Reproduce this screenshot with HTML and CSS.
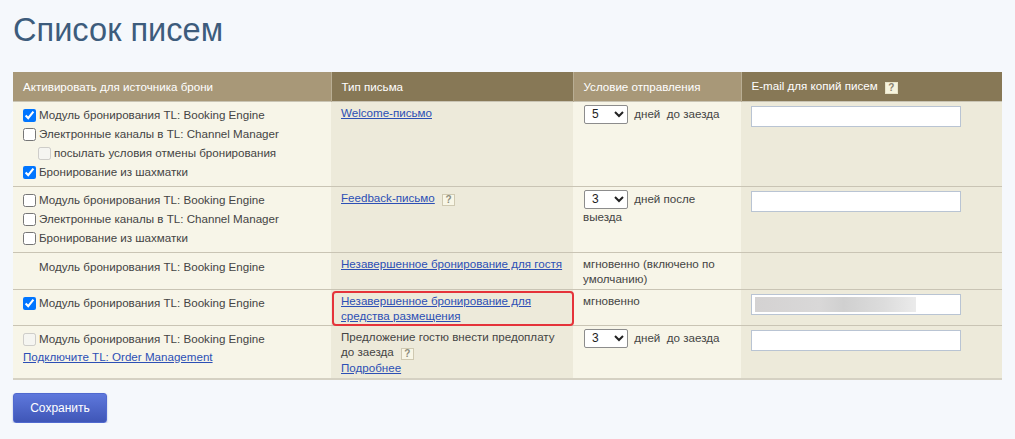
FILE: index.html
```html
<!DOCTYPE html>
<html lang="ru">
<head>
<meta charset="utf-8">
<title>Список писем</title>
<link rel="stylesheet" href="styles.css">
</head>
<body>
<div class="page">
  <h1 class="title">Список писем</h1>
  <table class="letters">
    <colgroup>
      <col class="c1"><col class="c2"><col class="c3"><col class="c4">
    </colgroup>
    <thead>
      <tr>
        <th class="h-light">Активировать для источника брони</th>
        <th class="h-dark">Тип письма</th>
        <th class="h-light">Условие отправления</th>
        <th class="h-dark">E-mail для копий писем <span class="help help-head">?</span></th>
      </tr>
    </thead>
    <tbody>
      <tr class="r1">
        <td class="light">
          <label class="opt"><input type="checkbox" checked> Модуль бронирования TL: Booking Engine</label>
          <label class="opt"><input type="checkbox"> Электронные каналы в TL: Channel Manager</label>
          <label class="opt sub"><input type="checkbox" disabled> посылать условия отмены бронирования</label>
          <label class="opt"><input type="checkbox" checked> Бронирование из шахматки</label>
        </td>
        <td class="dark type"><a href="#" class="link">Welcome-письмо</a></td>
        <td class="light cond">
          <select class="days"><option>5</option></select> дней&nbsp; до заезда
        </td>
        <td class="dark"><div class="email"></div></td>
      </tr>
      <tr class="r2">
        <td class="light">
          <label class="opt"><input type="checkbox"> Модуль бронирования TL: Booking Engine</label>
          <label class="opt"><input type="checkbox"> Электронные каналы в TL: Channel Manager</label>
          <label class="opt"><input type="checkbox"> Бронирование из шахматки</label>
        </td>
        <td class="dark type"><a href="#" class="link">Feedback-письмо</a> <span class="help">?</span></td>
        <td class="light cond">
          <select class="days"><option>3</option></select> дней после выезда
        </td>
        <td class="dark"><div class="email"></div></td>
      </tr>
      <tr class="r3">
        <td class="light"><div class="plain">Модуль бронирования TL: Booking Engine</div></td>
        <td class="dark type"><a href="#" class="link">Незавершенное бронирование для гостя</a></td>
        <td class="light text">мгновенно (включено по умолчанию)</td>
        <td class="dark"></td>
      </tr>
      <tr class="r4">
        <td class="light">
          <label class="opt"><input type="checkbox" checked> Модуль бронирования TL: Booking Engine</label>
        </td>
        <td class="dark type marked"><a href="#" class="link">Незавершенное бронирование для средства размещения</a></td>
        <td class="light text">мгновенно</td>
        <td class="dark"><div class="email"><span class="blurred"></span></div></td>
      </tr>
      <tr class="r5">
        <td class="light">
          <label class="opt"><input type="checkbox" disabled> Модуль бронирования TL: Booking Engine</label>
          <a href="#" class="link connect">Подключите TL: Order Management</a>
        </td>
        <td class="dark type text">Предложение гостю внести предоплату до заезда <span class="help">?</span><br><a href="#" class="link">Подробнее</a></td>
        <td class="light cond">
          <select class="days"><option>3</option></select> дней&nbsp; до заезда
        </td>
        <td class="dark"><div class="email"></div></td>
      </tr>
    </tbody>
  </table>
  <button class="save" type="button">Сохранить</button>
</div>
</body>
</html>
```
FILE: styles.css
```css
html, body {
  margin: 0;
  padding: 0;
  background: #f5f8fc;
}
body {
  font-family: "Liberation Sans", Arial, sans-serif;
  font-size: 11.6px;
  color: #444;
}
.page {
  padding: 9px 13px 0 13px;
}
.title {
  margin: 0 0 22px 0;
  font-size: 32.6px;
  font-weight: normal;
  line-height: 41px;
  color: #3d5c7c;
}
.letters {
  width: 989px;
  table-layout: fixed;
  border-collapse: collapse;
  border-bottom: 2px solid #d5d1c3;
}
.c1 { width: 318px; }
.c2 { width: 242px; }
.c3 { width: 168px; }
.c4 { width: 261px; }

.letters th {
  height: 29px;
  padding: 0 10px;
  text-align: left;
  font-weight: normal;
  color: #fff;
  vertical-align: middle;
  box-sizing: border-box;
}
.h-light { background: #a89878; }
.h-dark { background: #877856; }
.letters th + th { border-left: 1px solid #b9ae94; }

.letters td {
  vertical-align: top;
  padding: 4px 10px 0 10px;
  line-height: 15.5px;
  border-top: 1px solid #c9c4b4;
  box-sizing: border-box;
}
.light { background: #f7f5e8; }
.dark { background: #edeada; }
.letters td.light:first-child { padding-left: 6px; }

.r1 td { height: 85px; }
.r2 td { height: 66px; }
.r3 td { height: 37px; }
.r4 td { height: 36px; }
.r5 td { height: 54px; }

.opt {
  display: flex;
  align-items: center;
  height: 19px;
  white-space: nowrap;
}
.opt input {
  width: 13px;
  height: 13px;
  margin: 0 3px 0 4px;
}
.opt.sub { padding-left: 15px; }
.plain {
  padding: 2px 0 0 20px;
}
.connect {
  display: inline-block;
  margin: 0 0 0 4px;
}
.link {
  color: #2c4fb5;
  text-decoration: underline;
}
.letters td.type { padding: 3px 4px 0 10px; }
.letters td.text { padding-top: 3px; }
.letters td.cond { padding-top: 3px; line-height: 16px; }

.days {
  width: 44px;
  height: 19px;
  margin: 0 3px 0 1px;
  padding: 0 0 0 3px;
  font-family: "Liberation Sans", Arial, sans-serif;
  font-size: 12px;
  color: #222;
  background: #fff;
  border: 1px solid #8c8c8c;
  border-radius: 2px;
  vertical-align: middle;
}

.email {
  width: 210px;
  height: 21px;
  box-sizing: border-box;
  background: #fff;
  border: 1px solid #b9c4d3;
  padding: 2px 3px;
}
.blurred {
  display: block;
  width: 161px;
  height: 15px;
  background: linear-gradient(90deg, #d4d2d2 0%, #d9d8d8 40%, #d0d0d0 55%, #dcdcdc 80%, #ebebeb 100%);
}

.help {
  display: inline-block;
  width: 13px;
  height: 12px;
  box-sizing: border-box;
  line-height: 10px;
  text-align: center;
  font-size: 10px;
  font-weight: bold;
  color: #8c8c7c;
  background: #f8f6e6;
  border: 1px solid #cfc9b1;
  vertical-align: -1px;
  margin-left: 4px;
}
.help-head {
  background: #f7f4de;
  border-color: #e8e3c8;
  color: #8a8270;
}

.marked { position: relative; }
.marked::after {
  content: "";
  position: absolute;
  left: 1px;
  top: 1px;
  right: -1px;
  bottom: -1px;
  border: 2px solid #e5333a;
  border-radius: 4px;
}

.save {
  margin-top: 13px;
  width: 94px;
  height: 30px;
  font-family: "Liberation Sans", Arial, sans-serif;
  font-size: 12px;
  color: #fff;
  background: linear-gradient(#5e78dc, #3f56b7);
  border: 1px solid #5069cf;
  border-radius: 3px;
  box-shadow: 0 1px 2px rgba(40, 60, 140, 0.35);
}
```
